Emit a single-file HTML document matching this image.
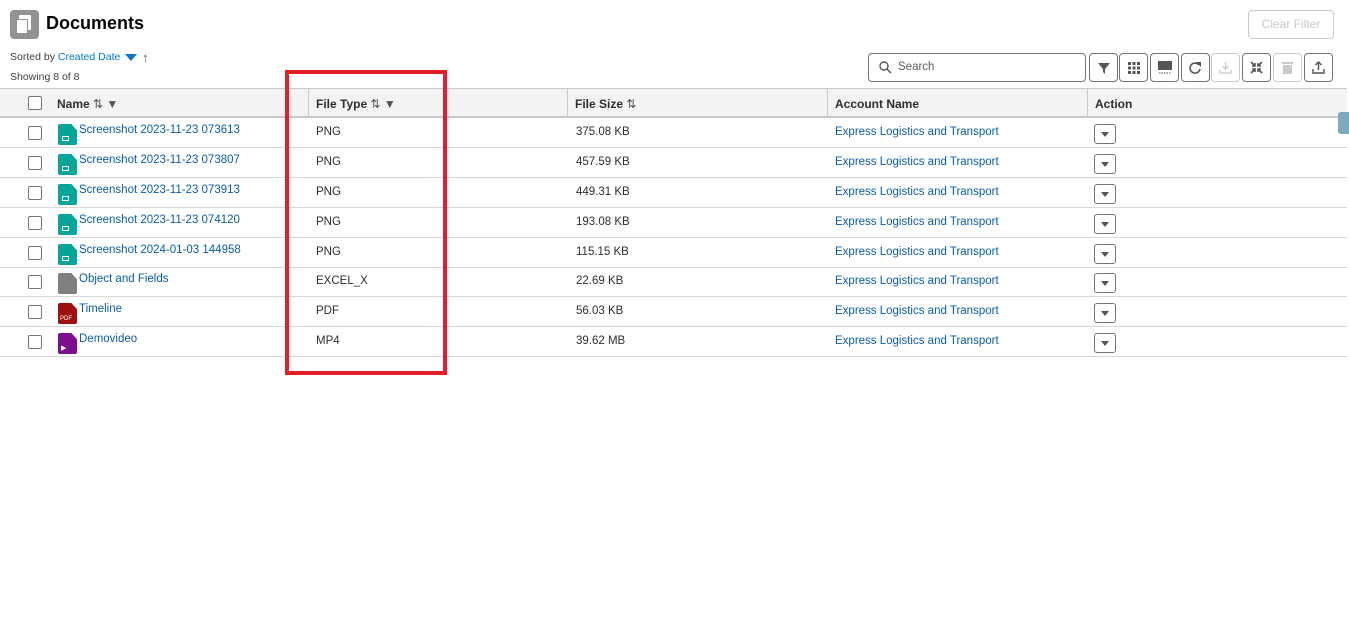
<!DOCTYPE html><html><head><style>
*{box-sizing:border-box;margin:0;padding:0}
body{width:1349px;height:625px;background:#fff;font-family:"Liberation Sans",sans-serif;font-size:11.5px;color:#181818;position:relative;overflow:hidden}
.abs{position:absolute}
.btn{position:absolute;top:53px;width:29px;height:29px;border:1px solid #747474;border-radius:4px;background:#fff;display:flex;align-items:center;justify-content:center}
.hdr{position:absolute;top:88px;left:0;width:1347px;height:30px;background:#f3f3f3;border-top:1px solid #c9c9c9;border-bottom:2px solid #c9c9c9}
.hdr span{position:absolute;top:8px;font-weight:bold;font-size:12px;color:#2e2e2e}
.vl{position:absolute;top:0;width:1px;height:28px;background:#c9c9c9}
.row{position:absolute;left:0;width:1347px;height:30px;border-bottom:1px solid #d8d8d8}
.cb{position:absolute;left:28px;top:8px;width:14px;height:14px;border:1px solid #747474;border-radius:2px;background:#fff}
.ic{position:absolute;left:58px;top:6px;width:19px;height:21px;border-radius:2px;clip-path:polygon(0 0,70% 0,100% 30%,100% 100%,0 100%)}
.ic i{position:absolute;left:4px;bottom:4px;width:7px;height:5px;border:1px solid #fff}
.nm{position:absolute;left:79px;top:6px;color:#0b5cab}
.ty{position:absolute;left:316px;top:8px;color:#2e2e2e}
.sz{position:absolute;left:576px;top:8px;color:#2e2e2e}
.ac{position:absolute;left:835px;top:8px;color:#0b5cab}
.dd{position:absolute;left:1094px;top:6px;width:22px;height:20px;border:1px solid #747474;border-radius:3px}
.dd:after{content:"";position:absolute;left:6px;top:7px;border-left:4px solid transparent;border-right:4px solid transparent;border-top:5px solid #555}
</style></head><body>
<div class="abs" style="left:10px;top:10px;width:29px;height:29px;background:#939393;border-radius:4px">
<div class="abs" style="left:9px;top:5px;width:12px;height:15px;background:#fff;border-radius:1px"></div>
<div class="abs" style="left:6px;top:9px;width:12px;height:15px;background:#fff;border:1px solid #939393;border-radius:1px"></div></div>
<div class="abs" style="left:46px;top:13px;font-size:18px;font-weight:bold;color:#080707">Documents</div>
<div class="abs" style="left:10px;top:51px;font-size:10.5px;color:#3e3e3c">Sorted by <span style="color:#0176d3">Created Date</span></div>
<div class="abs" style="left:125px;top:54px;border-left:6px solid transparent;border-right:6px solid transparent;border-top:7px solid #0176d3"></div>
<div class="abs" style="left:142px;top:50px;font-size:13px;color:#555;font-weight:bold">↑</div>
<div class="abs" style="left:10px;top:71px;font-size:10.5px;color:#3e3e3c">Showing 8 of 8</div>
<div class="abs" style="left:1248px;top:10px;width:86px;height:29px;border:1px solid #c9c9c9;border-radius:4px;color:#c9c9c9;font-size:12px;text-align:center;line-height:27px">Clear Filter</div>
<div class="abs" style="left:868px;top:53px;width:218px;height:29px;border:1px solid #747474;border-radius:4px;color:#5c5c5c;padding:7px 0 0 29px">Search
<svg class="abs" style="left:10px;top:7px" width="13" height="13" viewBox="0 0 13 13"><circle cx="5" cy="5" r="4" fill="none" stroke="#555" stroke-width="1.4"/><path d="M8 8l4 4" stroke="#555" stroke-width="1.5"/></svg></div>
<div class="btn" style="left:1089px"><svg width="12" height="12"><path d="M0 1h12L7 7v5L5 10V7z" fill="#555"/></svg></div>
<div class="btn" style="left:1119px"><svg width="12" height="12" fill="#555"><rect x="0" y="0" width="3" height="3"/><rect x="4.5" y="0" width="3" height="3"/><rect x="9" y="0" width="3" height="3"/><rect x="0" y="4.5" width="3" height="3"/><rect x="4.5" y="4.5" width="3" height="3"/><rect x="9" y="4.5" width="3" height="3"/><rect x="0" y="9" width="3" height="3"/><rect x="4.5" y="9" width="3" height="3"/><rect x="9" y="9" width="3" height="3"/></svg></div>
<div class="btn" style="left:1150px"><svg width="14" height="13"><rect width="14" height="9" fill="#555"/><path d="M1 12h12" stroke="#555" stroke-dasharray="1.5 1"/></svg></div>
<div class="btn" style="left:1181px"><svg width="13" height="13"><path d="M10 4A5 5 0 1 0 11 8" fill="none" stroke="#555" stroke-width="1.6"/><path d="M7 1l5 0 0 5z" fill="#555"/></svg></div>
<div class="btn" style="left:1211px;border-color:#c9c9c9"><svg width="13" height="13"><path d="M6.5 1v7M3.5 5l3 3 3-3M1 9v3h11V9" fill="none" stroke="#c9c9c9" stroke-width="1.3"/></svg></div>
<div class="btn" style="left:1242px"><svg width="13" height="13" stroke="#555" stroke-width="1.6" fill="none"><path d="M1 1l4 4M12 1L8 5M1 12l4-4M12 12L8 8"/><path d="M5 2v3H2M8 2v3h3M5 11V8H2M8 11V8h3"/></svg></div>
<div class="btn" style="left:1273px;border-color:#c9c9c9"><svg width="11" height="13" fill="#c9c9c9"><rect y="1" width="11" height="2"/><rect x="1" y="4" width="9" height="9"/></svg></div>
<div class="btn" style="left:1304px"><svg width="13" height="13"><path d="M6.5 9V1M3.5 4l3-3 3 3M1 8v4h11V8" fill="none" stroke="#555" stroke-width="1.4"/></svg></div>

<div class="hdr">
<div class="abs" style="left:28px;top:7px;width:14px;height:14px;border:1px solid #747474;border-radius:2px;background:#fff"></div>
<span style="left:57px">Name <span style="position:static;font-weight:normal;color:#555">⇅ ▼</span></span>
<div class="vl" style="left:308px"></div>
<span style="left:316px">File Type <span style="position:static;font-weight:normal;color:#555">⇅ ▼</span></span>
<div class="vl" style="left:567px"></div>
<span style="left:575px">File Size <span style="position:static;font-weight:normal;color:#555">⇅</span></span>
<div class="vl" style="left:827px"></div>
<span style="left:835px">Account Name</span>
<div class="vl" style="left:1087px"></div>
<span style="left:1095px">Action</span>
</div>
<div class="abs" style="left:1338px;top:112px;width:11px;height:22px;background:#7aa9c0;border-radius:3px 0 0 3px"></div>

<div class="row" style="top:118px"><div class="cb"></div><div class="ic" style="background:#06a59a"><i></i></div><div class="nm">Screenshot 2023-11-23 073613</div><div class="ty">PNG</div><div class="sz">375.08 KB</div><div class="ac">Express Logistics and Transport</div><div class="dd"></div></div>
<div class="row" style="top:148px"><div class="cb"></div><div class="ic" style="background:#06a59a"><i></i></div><div class="nm">Screenshot 2023-11-23 073807</div><div class="ty">PNG</div><div class="sz">457.59 KB</div><div class="ac">Express Logistics and Transport</div><div class="dd"></div></div>
<div class="row" style="top:178px"><div class="cb"></div><div class="ic" style="background:#06a59a"><i></i></div><div class="nm">Screenshot 2023-11-23 073913</div><div class="ty">PNG</div><div class="sz">449.31 KB</div><div class="ac">Express Logistics and Transport</div><div class="dd"></div></div>
<div class="row" style="top:208px"><div class="cb"></div><div class="ic" style="background:#06a59a"><i></i></div><div class="nm">Screenshot 2023-11-23 074120</div><div class="ty">PNG</div><div class="sz">193.08 KB</div><div class="ac">Express Logistics and Transport</div><div class="dd"></div></div>
<div class="row" style="top:238px"><div class="cb"></div><div class="ic" style="background:#06a59a"><i></i></div><div class="nm">Screenshot 2024-01-03 144958</div><div class="ty">PNG</div><div class="sz">115.15 KB</div><div class="ac">Express Logistics and Transport</div><div class="dd"></div></div>
<div class="row" style="top:267px"><div class="cb"></div><div class="ic" style="background:#7f7f7f"></div><div class="nm">Object and Fields</div><div class="ty">EXCEL_X</div><div class="sz">22.69 KB</div><div class="ac">Express Logistics and Transport</div><div class="dd"></div></div>
<div class="row" style="top:297px"><div class="cb"></div><div class="ic" style="background:#a00f0f"><span style="position:absolute;left:2px;bottom:2px;font-size:6px;color:#fff">PDF</span></div><div class="nm">Timeline</div><div class="ty">PDF</div><div class="sz">56.03 KB</div><div class="ac">Express Logistics and Transport</div><div class="dd"></div></div>
<div class="row" style="top:327px"><div class="cb"></div><div class="ic" style="background:#7f0d8f"><span style="position:absolute;left:3px;bottom:2px;font-size:7px;color:#fff">▶</span></div><div class="nm">Demovideo</div><div class="ty">MP4</div><div class="sz">39.62 MB</div><div class="ac">Express Logistics and Transport</div><div class="dd"></div></div>

<div class="abs" style="left:285px;top:70px;width:162px;height:305px;border:4px solid #e41e26"></div>
</body></html>
